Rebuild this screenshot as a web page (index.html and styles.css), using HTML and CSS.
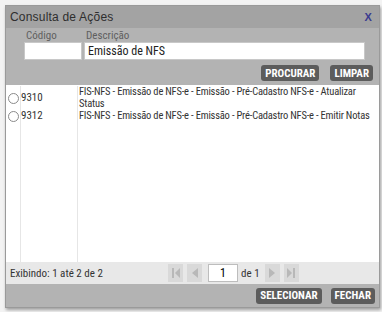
FILE: index.html
```html
<!DOCTYPE html>
<html lang="pt-BR">
<head>
    <meta charset="UTF-8">
    <title>Consulta de Ações</title>
    <link rel="stylesheet" href="styles.css">
</head>
<body>
    <div class="dialog">
        <div class="dialog-title">
            <span>Consulta de Ações</span>
            <a class="dialog-close" href="#">X</a>
        </div>

        <div class="filters">
            <div class="filter-row">
                <div class="field field-code">
                    <label class="field-label" for="codigo">Código</label>
                    <input type="text" id="codigo" class="field-input">
                </div>
                <div class="field field-desc">
                    <label class="field-label" for="descricao">Descrição</label>
                    <input type="text" id="descricao" class="field-input" value="Emissão de NFS">
                </div>
            </div>
            <div class="filter-actions">
                <button class="btn">PROCURAR</button>
                <button class="btn">LIMPAR</button>
            </div>
        </div>

        <div class="grid">
            <div class="grid-row">
                <div class="cell cell-radio"><span class="radio"></span></div>
                <div class="cell cell-code">9310</div>
                <div class="cell cell-desc">FIS-NFS - Emissão de NFS-e - Emissão - Pré-Cadastro NFS-e - Atualizar Status</div>
            </div>
            <div class="grid-row">
                <div class="cell cell-radio"><span class="radio"></span></div>
                <div class="cell cell-code">9312</div>
                <div class="cell cell-desc">FIS-NFS - Emissão de NFS-e - Emissão - Pré-Cadastro NFS-e - Emitir Notas</div>
            </div>
            <div class="grid-fill">
                <div class="cell cell-radio"></div>
                <div class="cell cell-code"></div>
                <div class="cell cell-desc"></div>
            </div>
        </div>

        <div class="pager">
            <span class="pager-info">Exibindo: 1 até 2 de 2</span>
            <div class="pager-nav">
                <span class="pg-btn">
                    <svg width="8" height="10" viewBox="0 0 8 10"><rect x="0" y="0" width="2" height="10"/><polygon points="8,0 8,10 3,5"/></svg>
                </span>
                <span class="pg-btn">
                    <svg width="6" height="10" viewBox="0 0 6 10"><polygon points="6,0 6,10 0,5"/></svg>
                </span>
                <input type="text" class="pg-input" value="1">
                <span class="pg-total">de 1</span>
                <span class="pg-btn">
                    <svg width="6" height="10" viewBox="0 0 6 10"><polygon points="0,0 0,10 6,5"/></svg>
                </span>
                <span class="pg-btn">
                    <svg width="8" height="10" viewBox="0 0 8 10"><polygon points="0,0 0,10 5,5"/><rect x="6" y="0" width="2" height="10"/></svg>
                </span>
            </div>
        </div>

        <div class="dialog-actions">
            <button class="btn">SELECIONAR</button>
            <button class="btn">FECHAR</button>
        </div>
    </div>
</body>
</html>
```

FILE: styles.css
```css
:root {
    --page-bg: #f3f3f3;
    --title-bg: #a3a3a3;
    --panel-bg: #b3b3b3;
    --footer-bg: #e8e8e8;
    --text: #333333;
    --label: #5f5f5f;
    --btn-bg: #5c5c5c;
    --grid-line: #e6e6e6;
}

* {
    margin: 0;
    padding: 0;
    box-sizing: border-box;
}

body {
    font-family: 'Roboto Condensed', 'DejaVu Sans Condensed', Roboto, sans-serif;
    font-stretch: condensed;
    font-size: 11px;
    color: var(--text);
    background-color: var(--page-bg);
    padding: 5px;
}

.dialog {
    width: 375px;
    background-color: var(--panel-bg);
    border: 1px solid #9a9a9a;
    box-shadow: 1px 2px 3px rgba(0, 0, 0, 0.35);
}

.dialog-title {
    height: 22px;
    background-color: var(--title-bg);
    display: flex;
    justify-content: space-between;
    align-items: center;
    padding: 0 7px 0 4px;
    font-family: 'Liberation Sans', Arial, sans-serif;
    font-stretch: normal;
    font-size: 12px;
    letter-spacing: 0.2px;
    color: #2e2e2e;
}

.dialog-close {
    color: #3b3b8f;
    font-weight: bold;
    font-size: 11px;
    text-decoration: none;
}

.filters {
    padding: 2px 6px 4px 18px;
}

.filter-row {
    display: flex;
    gap: 2px;
}

.field {
    display: flex;
    flex-direction: column;
}

.field-code {
    width: 58px;
}

.field-desc {
    width: 281px;
}

.field-label {
    color: var(--label);
    padding-left: 2px;
    height: 12px;
    line-height: 12px;
}

.field-input {
    height: 18px;
    border: 1px solid #c8c8c8;
    background: #fff;
    font: inherit;
    font-size: 12px;
    padding: 0 3px;
    color: #222;
    outline: none;
}

.filter-actions {
    display: flex;
    justify-content: flex-end;
    gap: 11px;
    margin-top: 5px;
}

.btn {
    height: 16px;
    padding: 0 4px;
    background-color: var(--btn-bg);
    color: #fff;
    border: none;
    border-radius: 3px;
    font: inherit;
    font-size: 11px;
    font-weight: bold;
    cursor: pointer;
}

.grid {
    height: 177px;
    background-color: #fff;
    display: flex;
    flex-direction: column;
    padding-top: 1px;
}

.grid-row,
.grid-fill {
    display: flex;
}

.grid-fill {
    flex: 1;
}

.cell {
    line-height: 12px;
    display: flex;
    align-items: center;
}

.cell-radio {
    width: 15px;
    border-right: 1px solid var(--grid-line);
    padding-left: 2px;
}

.cell-code {
    width: 57px;
    border-right: 1px solid var(--grid-line);
}

.cell-desc {
    flex: 1;
    display: block;
    padding-left: 1px;
    font-size: 10.5px;
    letter-spacing: -0.2px;
}

.radio {
    display: block;
    width: 11px;
    height: 11px;
    border: 1px solid #8a8a8a;
    border-radius: 50%;
    background: #fff;
}

.pager {
    height: 22px;
    background-color: var(--footer-bg);
    display: flex;
    align-items: center;
    padding-left: 4px;
}

.pager-info {
    width: 158px;
}

.pager-nav {
    display: flex;
    align-items: center;
}

.pg-btn {
    width: 15px;
    height: 18px;
    background-color: #d9d9d9;
    display: flex;
    align-items: center;
    justify-content: center;
    margin-right: 4px;
}

.pg-btn svg {
    fill: #b8b8b8;
}

.pg-input {
    width: 30px;
    height: 18px;
    border: 1px solid #bdbdbd;
    text-align: center;
    font: inherit;
    font-size: 12px;
    margin-left: 2px;
    outline: none;
}

.pg-total {
    margin: 0 5px 0 3px;
}

.dialog-actions {
    height: 23px;
    display: flex;
    justify-content: flex-end;
    align-items: center;
    gap: 9px;
    padding-right: 4px;
}
```
